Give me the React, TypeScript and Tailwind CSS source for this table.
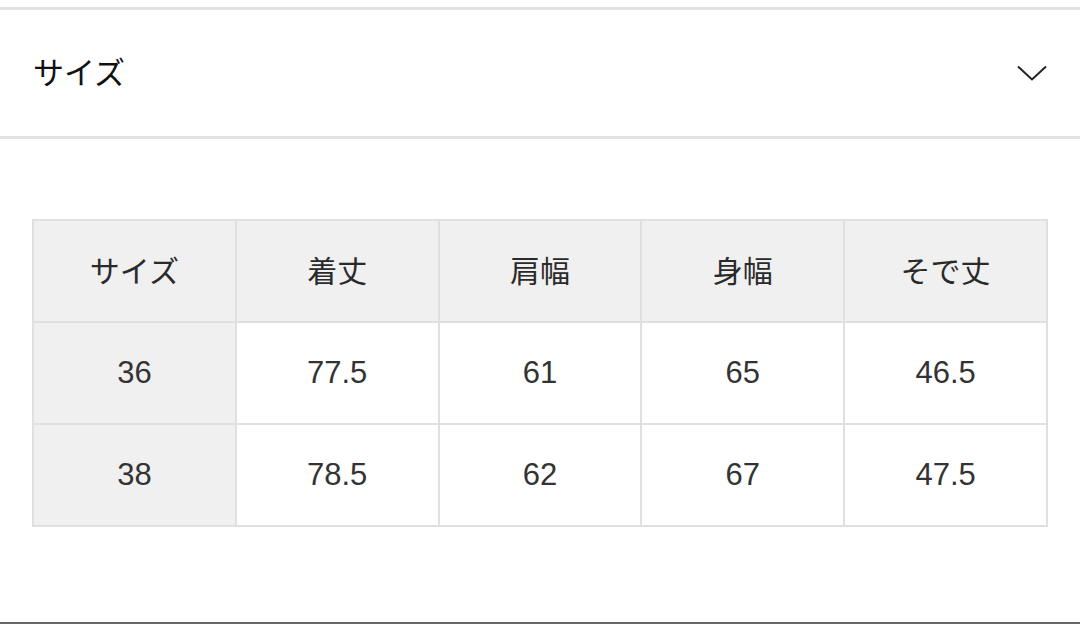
const headers = ['サイズ', '着丈', '肩幅', '身幅', 'そで丈'];
const rows = [
  ['36', '77.5', '61', '65', '46.5'],
  ['38', '78.5', '62', '67', '47.5'],
];

export default function App() {
  return (
    <div
      className="w-[1080px] h-[624px] bg-white flex flex-col text-[#222] overflow-hidden"
      style={{ fontFamily: '"Liberation Sans", "Noto Sans CJK JP", sans-serif' }}
    >
      <div className="mt-[7px] border-t-[3px] border-b-[3px] border-[#e2e2e2] h-[132px] flex items-center justify-between pl-[33px] pr-[33px]">
        <span className="text-[31px] leading-none text-[#111]">サイズ</span>
        <svg width="30" height="16" viewBox="0 0 30 16" fill="none">
          <path d="M1 1.5 L15 14.5 L29 1.5" stroke="#222" strokeWidth="2" />
        </svg>
      </div>

      <div className="mt-[80px] mx-[32px] bg-[#e0e0e0] p-[2px] grid grid-cols-5 gap-[2px]">
        {headers.map((h) => (
          <div key={h} className="h-[100px] bg-[#f0f0f0] flex items-center justify-center text-[30px] text-[#2a2a2a]">
            {h}
          </div>
        ))}
        {rows.map((r) =>
          r.map((c, i) => (
            <div
              key={r[0] + i}
              className={`h-[100px] flex items-center justify-center text-[31px] text-[#333] ${i === 0 ? 'bg-[#f0f0f0]' : 'bg-white'}`}
            >
              {c}
            </div>
          ))
        )}
      </div>

      <div className="flex-1" />
      <div className="h-[2px] bg-[#666]" />
    </div>
  );
}
